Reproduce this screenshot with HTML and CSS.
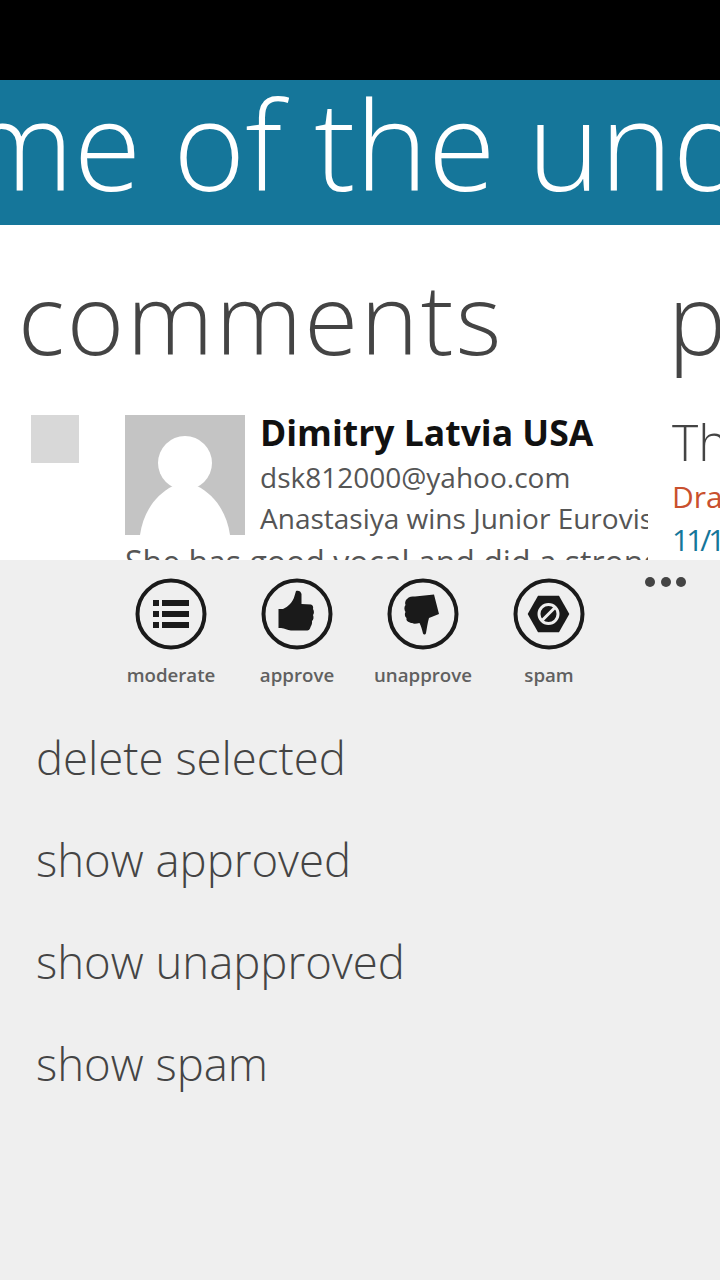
FILE: index.html
```html
<!DOCTYPE html>
<html lang="en">
<head>
    <meta charset="UTF-8">
    <title>comments</title>
    <link rel="stylesheet" href="styles.css">
</head>
<body>
<div class="status"></div>
<div class="banner"><div class="banner-text">me of the unde</div></div>

<section class="pano">
    <div class="col-main">
        <div class="pano-title">comments</div>
        <div class="comment">
            <div class="check"></div>
            <div class="comment-top">
                <svg class="avatar" viewBox="0 0 120 120">
                    <rect width="120" height="120" fill="#c4c4c4"/>
                    <circle cx="60" cy="48" r="27" fill="#fff"/>
                    <path d="M15 120C18 98 30 80 48 71L72 71C90 80 102 98 105 120Z" fill="#fff"/>
                </svg>
                <div class="comment-info">
                    <div class="name">Dimitry Latvia USA</div>
                    <div class="email">dsk812000@yahoo.com</div>
                    <div class="line">Anastasiya wins Junior Eurovision</div>
                </div>
            </div>
            <div class="line body">She has good vocal and did a strong performance</div>
        </div>
    </div>
    <div class="col-next">
        <div class="pano-title next-title">posts</div>
        <div class="post-title">The</div>
        <div class="post-state">Draft</div>
        <div class="post-date">11/14/2013</div>
    </div>
</section>

<section class="tray">
    <div class="appbar">
        <div class="app-btn">
            <svg class="app-icon" viewBox="0 0 72 72">
                <circle class="ring" cx="36" cy="36" r="33.5"/>
                <path class="ink" d="M18 22h6v6h-6zM27 22h27v6h-27zM18 33h6v6h-6zM27 33h27v6h-27zM18 44h6v6h-6zM27 44h27v6h-27z"/>
            </svg>
            <span>moderate</span>
        </div>
        <div class="app-btn">
            <svg class="app-icon" viewBox="0 0 72 72">
                <circle class="ring" cx="36" cy="36" r="33.5"/>
                <path class="ink" d="M35 13C37 12 40 13 40.5 16L40.5 26L50 26.5C52 27 52.5 29 52 31C53.5 33 53 36 52 37C53 39 52.5 42 51 43C51.5 46 50 48 49.5 49C49 52 47 52.5 45 52.5L30 52.5C26 52.5 24 50 20 50L17.5 50L17.5 31L22 31C27 29 32 24 33.5 18Z"/>
            </svg>
            <span>approve</span>
        </div>
        <div class="app-btn">
            <svg class="app-icon" viewBox="0 0 72 72">
                <circle class="ring" cx="36" cy="36" r="33.5"/>
                <path class="ink" d="M20 21C22 18.5 25 18.5 28 18.5L47 16.5L52 36L42 40C40.5 45 40 50 39 55C38.5 57 36.5 57 36 55.5C35 51 34 48 32.5 45C29 46 25 46 23 44.5C20 44 19 42 19.5 40C17.5 38.5 17.5 35.5 18.5 34C17 32 17 28.5 18.5 27C17.5 25 18.5 22 20 21Z"/>
            </svg>
            <span>unapprove</span>
        </div>
        <div class="app-btn">
            <svg class="app-icon" viewBox="0 0 72 72">
                <circle class="ring" cx="36" cy="36" r="33.5"/>
                <path class="ink" d="M14.7 36L25 17.7H46L56.3 36L46 54.3H25Z"/>
                <circle class="cut" cx="35.5" cy="36" r="9.5"/>
                <path class="cut" d="M29 42.5L42 29.5"/>
            </svg>
            <span>spam</span>
        </div>
        <div class="dots"><i></i><i></i><i></i></div>
    </div>
    <ul class="menu">
        <li>delete selected</li>
        <li>show approved</li>
        <li>show unapproved</li>
        <li>show spam</li>
    </ul>
</section>
</body>
</html>
```

FILE: styles.css
```css
html, body {
    margin: 0;
    width: 720px;
    height: 1280px;
    overflow: hidden;
    background: #fff;
    font-family: "Open Sans", "Noto Sans", sans-serif;
}

.status {
    height: 80px;
    background: #000;
}

.banner {
    height: 145px;
    background: #15769a;
    overflow: hidden;
}

.banner-text {
    margin: -1px 0 0 -35px;
    color: #fff;
    font-size: 123px;
    font-weight: 300;
    line-height: 130px;
    white-space: nowrap;
}

.pano {
    display: flex;
    height: 335px;
    overflow: hidden;
}

.col-main {
    flex: none;
    width: 630px;
    padding-left: 18px;
    overflow: hidden;
}

.col-next {
    flex: none;
    padding-left: 24px;
    white-space: nowrap;
}

.pano-title {
    margin-top: 37px;
    color: #444;
    font-size: 98px;
    font-weight: 300;
    letter-spacing: 2.3px;
    line-height: 110px;
    white-space: nowrap;
}

.next-title {
    margin-left: -4px;
}

.comment {
    position: relative;
    margin-top: 43px;
    padding-left: 107px;
}

.check {
    position: absolute;
    left: 13px;
    top: 0;
    width: 48px;
    height: 48px;
    background: #d8d8d8;
}

.comment-top {
    display: flex;
    gap: 15px;
}

.avatar {
    flex: none;
    width: 120px;
    height: 120px;
}

.comment-info {
    min-width: 0;
    margin-top: -2px;
}

.name {
    color: #111;
    font-size: 35.5px;
    font-weight: 700;
    line-height: 38px;
    white-space: nowrap;
}

.email {
    margin-top: 5px;
    color: #555;
    font-size: 28px;
    line-height: 42px;
    white-space: nowrap;
}

.line {
    color: #555;
    font-size: 28px;
    line-height: 40px;
    white-space: nowrap;
}

.body {
    margin-top: 2px;
    font-size: 32px;
    line-height: 44px;
}

.post-title {
    margin-top: 41px;
    color: #444;
    font-size: 50px;
    font-weight: 300;
    line-height: 58px;
}

.post-state {
    margin-top: 7px;
    color: #c9502e;
    font-size: 30px;
    line-height: 38px;
}

.post-date {
    margin-top: 4px;
    color: #15769a;
    font-size: 30px;
    letter-spacing: -3px;
    line-height: 40px;
}

.tray {
    height: 720px;
    background: #efefef;
}

.appbar {
    display: flex;
    padding: 18px 0 0 108px;
}

.app-btn {
    display: flex;
    flex: none;
    flex-direction: column;
    align-items: center;
    width: 126px;
    color: #606060;
    font-size: 18.7px;
    font-weight: 600;
    line-height: 26px;
}

.app-icon {
    width: 72px;
    height: 72px;
    margin-bottom: 12px;
}

.ring {
    fill: none;
    stroke: #1a1a1a;
    stroke-width: 4;
}

.ink {
    fill: #1a1a1a;
}

.cut {
    fill: none;
    stroke: #efefef;
    stroke-width: 3;
}

.dots {
    display: flex;
    gap: 5.5px;
    margin: -1px 0 0 33px;
}

.dots i {
    width: 10px;
    height: 10px;
    border-radius: 50%;
    background: #444;
}

.menu {
    margin: 18px 0 0;
    padding: 0 0 0 36px;
    list-style: none;
}

.menu li {
    color: #444;
    font-size: 45.5px;
    font-weight: 300;
    line-height: 102px;
}
```
